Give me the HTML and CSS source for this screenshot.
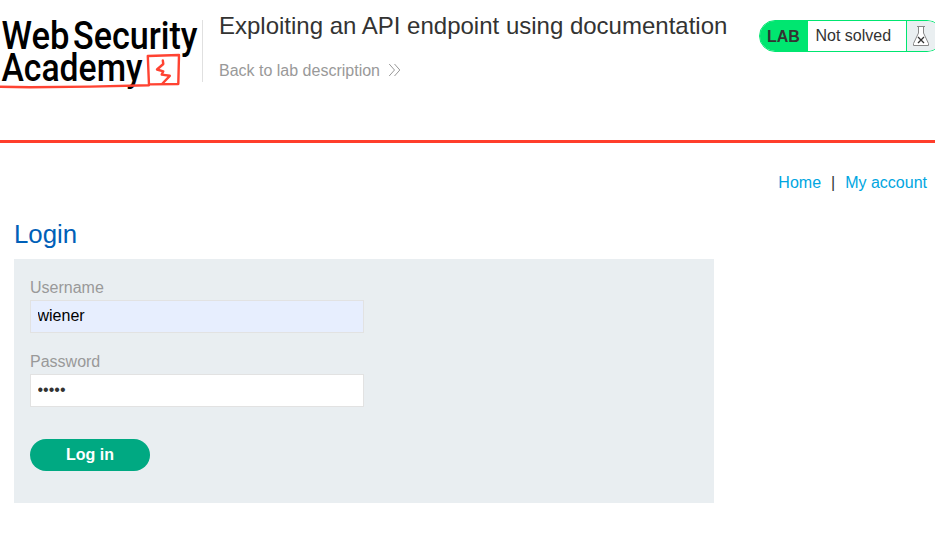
FILE: index.html
```html
<!DOCTYPE html>
<html lang="en">
<head>
<meta charset="utf-8">
<title>Exploiting an API endpoint using documentation</title>
<link rel="stylesheet" href="styles.css">
</head>
<body>
<header class="lab-header">
  <svg class="logo" width="202" height="82" viewBox="0 10 202 82" role="img" aria-label="Web Security Academy">
    <g class="logo-text">
      <text x="1.5" y="48.700" textLength="68" lengthAdjust="spacingAndGlyphs">Web</text>
      <text x="73" y="48.700" textLength="124.500" lengthAdjust="spacingAndGlyphs">Security</text>
      <text x="1.500" y="81.200" textLength="141" lengthAdjust="spacingAndGlyphs">Academy</text>
    </g>
    <g class="logo-mark">
      <path d="M0 86.700L30 87.300L90 86.600L149 85.300L147.800 56L179 55L178.300 84L150 84.400"/>
      <path d="M162.800 60.500L163.300 64L157 69.500L163.300 71.300L161.700 74.600L169.800 75.800L162.500 83.500"/>
    </g>
  </svg>
  <div class="title-box">
    <h1>Exploiting an API endpoint using documentation</h1>
    <a class="back" href="#">Back to lab description
      <svg width="13" height="14" viewBox="0 0 13 14"><path d="M1.200 1L6.500 7L1.200 13M6.500 1L11.800 7L6.500 13"/></svg>
    </a>
  </div>
  <div class="status">
    <span class="lab">LAB</span>
    <span class="state">Not solved</span>
    <span class="flask"><svg width="18" height="22" viewBox="0 0 18 22"><path class="glass" d="M5 1.500H13M6.500 1.500V8L1.500 18.500V20.500H16.500V18.500L11.500 8V1.500"/><path class="cross" d="M6 12L12 18M12 12L6 18"/></svg></span>
  </div>
</header>
<main>
  <nav><a href="#">Home</a><span>|</span><a href="#">My account</a></nav>
  <h2>Login</h2>
  <form>
    <label for="user">Username</label>
    <input class="filled" id="user" type="text" value="wiener">
    <label for="pass">Password</label>
    <input id="pass" type="password" value="peter">
    <button type="button">Log in</button>
  </form>
</main>
</body>
</html>
```
FILE: styles.css
```css
* { box-sizing: border-box; }
html { overflow: hidden; }
body {
  margin: 0;
  background: #fff;
  color: #333332;
  font: 16px/20px "Liberation Sans", Arial, sans-serif;
}
a { color: #00a6e1; text-decoration: none; }
.lab-header {
  display: flex;
  align-items: flex-start;
  height: 143px;
  padding-top: 10px;
  border-bottom: 3px solid #ff3e2b;
  overflow: hidden;
}
.logo { flex: none; display: block; }
.logo-text { font: 500 38px Roboto, sans-serif; fill: #000; }
.logo-mark { fill: none; stroke: #ff4332; stroke-width: 2.4; stroke-linejoin: round; stroke-linecap: round; }
.title-box {
  flex: none;
  width: 557px;
  height: 62px;
  margin-top: 10px;
  padding-left: 16px;
  border-left: 1px solid #e0e0e0;
}
h1 { margin: -8px 0 0; font-size: 24px; line-height: 28px; font-weight: 400; white-space: nowrap; }
.back { display: flex; align-items: center; gap: 8px; margin-top: 21px; color: #999; }
.back svg { margin-top: -2px; fill: none; stroke: #999; stroke-width: 1; }
.status {
  display: flex;
  flex: none;
  width: 184px;
  height: 32px;
  margin-top: 10px;
  border: 1px solid #00e670;
  border-radius: 16px;
  overflow: hidden;
  line-height: 30px;
}
.lab { width: 48px; padding-left: 7px; background: #00e670; font-weight: 700; line-height: 32px; }
.state { width: 98px; padding-left: 7.500px; }
.flask { flex: 1; padding: 4px 0 0 5px; background: #eaeff1; border-left: 1px solid #00e670; }
.flask svg { display: block; }
.glass { fill: #fff; stroke: #888; stroke-width: 1; }
.cross { stroke: #333; stroke-width: 1.3; }
main { padding: 30px 8px 0 14px; }
nav { display: flex; justify-content: flex-end; gap: 10px; }
h2 { margin: 26px 0 10px; font-size: 25.800px; line-height: 30px; font-weight: 400; color: #0060b8; }
form { width: 700px; height: 244px; padding: 19px 16px; background: #e9eef1; }
label { display: block; height: 22px; color: #999; }
input {
  display: block;
  width: 334px;
  height: 33px;
  margin: 0 0 19px;
  padding: 0 6.500px 2px;
  border: 1px solid #e2e2e2;
  background: #fff;
  color: #333332;
  font: inherit;
}
.filled { background: #e7eefe; color: #000; }
button {
  display: block;
  width: 120px;
  height: 32px;
  margin-top: 32px;
  padding: 0;
  border: 0;
  border-radius: 16px;
  background: #00a982;
  color: #fff;
  font: inherit;
  font-weight: 700;
}
```
